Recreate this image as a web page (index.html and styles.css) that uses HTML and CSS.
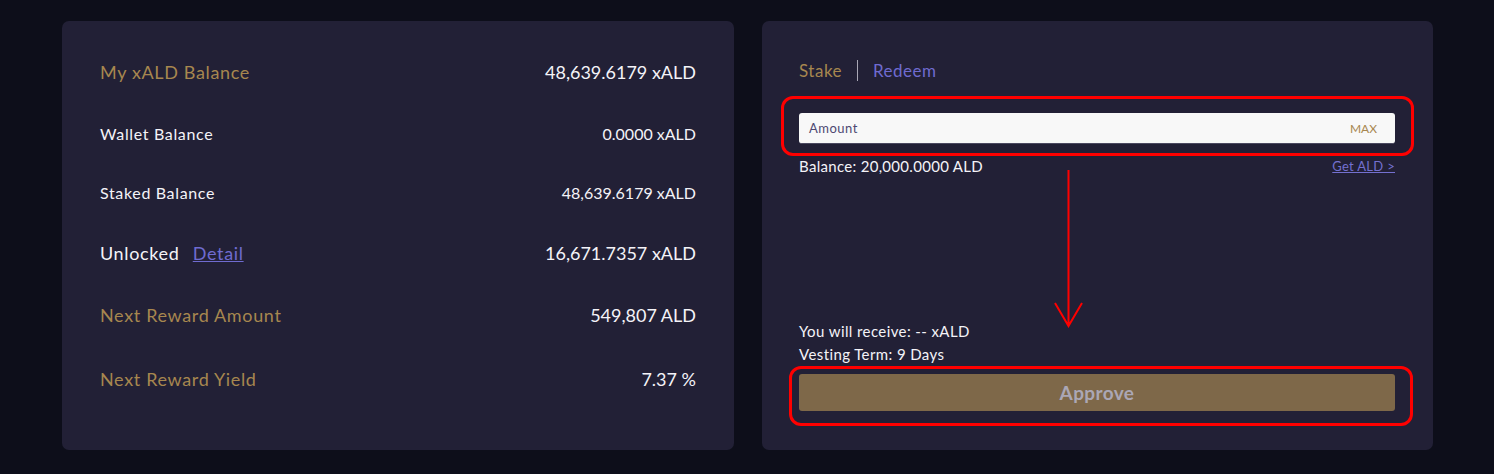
FILE: index.html
```html
<!DOCTYPE html>
<html>
<head>
<meta charset="utf-8">
<link rel="stylesheet" href="styles.css">
</head>
<body>
<div class="page">
  <section class="card stats">
    <div class="row r1 big"><span class="label gold">My xALD Balance</span><span>48,639.6179 xALD</span></div>
    <div class="row r2"><span class="label">Wallet Balance</span><span>0.0000 xALD</span></div>
    <div class="row r3"><span class="label">Staked Balance</span><span>48,639.6179 xALD</span></div>
    <div class="row r4 big"><span class="label">Unlocked <a class="link" href="#">Detail</a></span><span>16,671.7357 xALD</span></div>
    <div class="row r5 big"><span class="label gold">Next Reward Amount</span><span>549,807 ALD</span></div>
    <div class="row r6 big"><span class="label gold">Next Reward Yield</span><span>7.37 %</span></div>
  </section>
  <section class="card action">
    <div class="tabs">
      <span class="tab active">Stake</span>
      <span class="divider"></span>
      <span class="tab">Redeem</span>
    </div>
    <div class="field">
      <span class="placeholder">Amount</span>
      <span class="max">MAX</span>
      <span class="mark mark-field"></span>
    </div>
    <div class="balance">
      <span>Balance: 20,000.0000 ALD</span>
      <a class="get" href="#">Get ALD &gt;</a>
    </div>
    <div class="info">
      <div>You will receive: -- xALD</div>
      <div class="vest">Vesting Term: 9 Days</div>
    </div>
    <div class="btn">Approve<span class="mark mark-btn"></span></div>
    <svg class="arrow" width="40" height="160" viewBox="0 0 40 160">
      <path d="M20.5 0 V156 M7 133 L20.5 156 L34 133" fill="none" stroke="#ff0000" stroke-width="2"/>
    </svg>
  </section>
</div>
</body>
</html>
```
FILE: styles.css
```css
* { box-sizing: border-box; }
html, body { margin: 0; padding: 0; }
body {
  background: #0d0e1a;
  font-family: Lato, "Noto Sans", sans-serif;
  color: #f4f3f8;
  width: 1494px;
  height: 474px;
  overflow: hidden;
}
.page {
  display: flex;
  gap: 28px;
  padding: 21px 0 0 62px;
}
.card {
  background: #222036;
  border-radius: 7px;
  height: 429px;
}
.stats {
  width: 672px;
  padding: 38px 38px 0 38px;
  display: flex;
  flex-direction: column;
}
.row {
  display: flex;
  justify-content: space-between;
  align-items: center;
  height: 26px;
  font-size: 16px;
}
.row.big { font-size: 18px; }
.label { letter-spacing: 0.65px; }
.r2 { margin-top: 35px; }
.r3 { margin-top: 33px; }
.r4 { margin-top: 35px; }
.r5 { margin-top: 36px; }
.r6 { margin-top: 38px; }
.gold { color: #a7874f; }
.link { color: #6f6bd0; text-decoration: underline; margin-left: 8px; }

.action {
  width: 671px;
  padding: 38px 38px 39px 37px;
  display: flex;
  flex-direction: column;
  position: relative;
}
.tabs {
  display: flex;
  align-items: center;
  height: 22px;
  font-size: 17px;
  letter-spacing: 0.5px;
}
.tab { color: #6f6bd0; }
.tab.active { color: #a7874f; }
.divider {
  width: 1px;
  height: 21px;
  background: #a9a7b5;
  margin: 0 15px;
}
.field {
  position: relative;
  margin-top: 32px;
  height: 31px;
  background: #f8f8f8;
  border-radius: 3px;
  border-bottom: 1px solid #4b4960;
  display: flex;
  justify-content: space-between;
  align-items: center;
  padding: 0 18px 0 10px;
  font-size: 13px;
}
.placeholder { color: #4d4872; letter-spacing: 0.5px; }
.max { color: #a7874f; font-size: 12px; }
.mark {
  position: absolute;
  border: 3px solid #ff0000;
  border-radius: 12px;
  pointer-events: none;
}
.mark-field { left: -18px; top: -17px; right: -19px; bottom: -13px; }
.balance {
  display: flex;
  justify-content: space-between;
  align-items: center;
  margin-top: 13px;
  height: 18px;
  font-size: 15px;
  letter-spacing: 0.3px;
}
.get { color: #7470d0; font-size: 13px; text-decoration: underline; letter-spacing: 0.3px; }
.info {
  margin-top: auto;
  font-size: 15px;
  line-height: 18px;
  letter-spacing: 0.4px;
}
.vest { margin-top: 5px; }
.btn {
  position: relative;
  margin-top: 11px;
  height: 37px;
  background: #7e6849;
  border-radius: 3px;
  display: flex;
  align-items: center;
  justify-content: center;
  color: #aba7b5;
  font-weight: 700;
  font-size: 19px;
  letter-spacing: 0.4px;
}
.mark-btn { left: -10px; top: -8px; right: -18px; bottom: -15px; }
.arrow {
  position: absolute;
  left: 286px;
  top: 149px;
}
```
